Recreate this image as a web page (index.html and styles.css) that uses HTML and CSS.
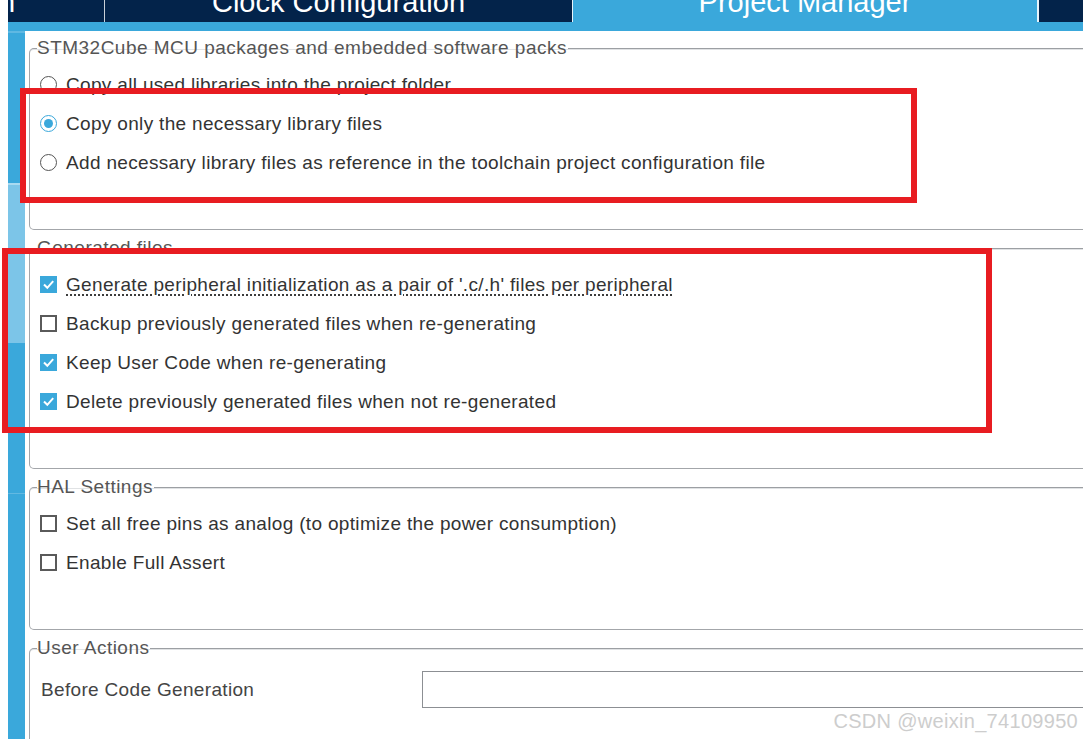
FILE: index.html
```html
<!DOCTYPE html>
<html lang="en">
<head>
<meta charset="UTF-8">
<meta name="viewport" content="width=device-width, initial-scale=1.0">
<title>Project Manager</title>
<link rel="stylesheet" href="styles.css">
</head>
<body>

<div class="app">
  <div class="tabs">
    <div class="tab tab-first">Pinout &amp; Configuration</div>
    <div class="tab tab-clock">Clock Configuration</div>
    <div class="tab tab-active">Project Manager</div>
    <div class="tab tab-last">Tools</div>
  </div>
  <div class="band"></div>

  <div class="main">
    <div class="rail">
      <div class="seg seg-top"></div>
      <div class="seg seg-light"></div>
      <div class="seg seg-bottom"></div>
    </div>

    <div class="content">
      <fieldset class="group">
        <legend>STM32Cube MCU packages and embedded software packs</legend>
        <div class="opt"><span class="radio"></span>Copy all used libraries into the project folder</div>
        <div class="opt"><span class="radio on"></span>Copy only the necessary library files</div>
        <div class="opt"><span class="radio"></span>Add necessary library files as reference in the toolchain project configuration file</div>
      </fieldset>

      <fieldset class="group">
        <legend>Generated files</legend>
        <div class="opt"><span class="check on"><svg viewBox="0 0 17 17"><polyline points="4,8.5 7.3,11.8 13.2,5.2"/></svg></span><span class="dotted">Generate peripheral initialization as a pair of '.c/.h' files per peripheral</span></div>
        <div class="opt"><span class="check"></span>Backup previously generated files when re-generating</div>
        <div class="opt"><span class="check on"><svg viewBox="0 0 17 17"><polyline points="4,8.5 7.3,11.8 13.2,5.2"/></svg></span>Keep User Code when re-generating</div>
        <div class="opt"><span class="check on"><svg viewBox="0 0 17 17"><polyline points="4,8.5 7.3,11.8 13.2,5.2"/></svg></span>Delete previously generated files when not re-generated</div>
      </fieldset>

      <fieldset class="group">
        <legend>HAL Settings</legend>
        <div class="opt"><span class="check"></span>Set all free pins as analog (to optimize the power consumption)</div>
        <div class="opt"><span class="check"></span>Enable Full Assert</div>
      </fieldset>

      <fieldset class="group group-open">
        <legend>User Actions</legend>
        <div class="field">
          <label class="field-label">Before Code Generation</label>
          <input class="field-input" type="text">
        </div>
      </fieldset>
    </div>
  </div>
</div>

<!-- annotation boxes drawn over the screenshot -->
<div class="mark mark-one"></div>
<div class="mark mark-two"></div>

<div class="watermark">CSDN @weixin_74109950</div>

</body>
</html>
```

FILE: styles.css
```css
html, body {
  height: 100%;
}
body {
  margin: 0 0 0 8px;
  overflow: hidden;
  background: #fff;
  font-family: "Liberation Sans", Arial, sans-serif;
  color: #333;
}
.app {
  height: 100%;
  display: flex;
  flex-direction: column;
}

/* top tab bar, scrolled so only the lower half shows */
.tabs {
  height: 22px;
  display: flex;
  overflow: hidden;
  background: #03234a;
  flex: none;
}
.tab {
  flex: none;
  height: 22px;
  line-height: 4px;
  font-size: 29px;
  color: #fff;
  text-align: center;
  white-space: nowrap;
  overflow: hidden;
}
.tab-first {
  width: 468px;
  margin-left: -372px;
  border-right: 1px solid #c9d0d8;
}
.tab-clock {
  width: 467px;
}
.tab-active {
  width: 464px;
  background: #3aa8db;
  border-left: 1px solid #e6f3fa;
  border-right: 2px solid #e6f3fa;
}
.tab-last {
  width: 300px;
}
.band {
  height: 9px;
  background: #3aa8db;
  flex: none;
}

.main {
  flex: 1;
  display: flex;
  min-height: 0;
}
.rail {
  width: 17px;
  flex: none;
  display: flex;
  flex-direction: column;
}
.seg-top {
  height: 150px;
  background: #3aa8db;
  border-top: 2px solid #5fb8e2;
  border-bottom: 2px solid #a9daf1;
}
.seg-light {
  height: 158px;
  background: #7cc5e8;
}
.seg-bottom {
  flex: 1;
  background: #3aa8db;
  background-image: linear-gradient(#3aa8db 150px, #62b9e2 150px, #62b9e2 151px, #3aa8db 151px);
}

.content {
  flex: 1;
  padding: 7px 0 0 4px;
  overflow: hidden;
}

.group {
  margin: 0 -40px 8px 0;
  padding: 7px 0 47px;
  border: 1px solid #a3a6aa;
  border-top-color: #9c9fa3;
  box-shadow: inset 0 1px 0 #e0e2e4;
  border-radius: 5px;
  min-width: 0;
}
.group-open {
  padding-bottom: 200px;
}
.group legend {
  margin-left: 7px;
  padding: 0 1px 0 0;
  line-height: 20px;
  font-size: 19px;
  letter-spacing: 0.48px;
  color: #555;
}

.opt {
  height: 39px;
  display: flex;
  align-items: center;
  padding-left: 10px;
  font-size: 19px;
  letter-spacing: 0.33px;
  color: #333;
  white-space: nowrap;
}
.radio, .check {
  flex: none;
  width: 17px;
  height: 17px;
  box-sizing: border-box;
  margin-right: 9px;
  display: flex;
  align-items: center;
  justify-content: center;
}
.radio {
  border: 1.5px solid #555;
  border-radius: 50%;
}
.radio.on {
  border-color: #3aa8db;
}
.radio.on::after {
  content: "";
  width: 9px;
  height: 9px;
  border-radius: 50%;
  background: #3aa8db;
}
.check {
  border: 2px solid #5a5a5a;
}
.check.on {
  border: none;
  background: #3aa8db;
}
.check svg {
  width: 17px;
  height: 17px;
}
.check polyline {
  fill: none;
  stroke: #fff;
  stroke-width: 2;
}
.dotted {
  text-decoration: underline dotted #333;
  text-underline-offset: 4px;
}

.field {
  display: flex;
  align-items: center;
  padding: 6px 0 0 11px;
}
.field-label {
  width: 381px;
  font-size: 19px;
  letter-spacing: 0.33px;
  color: #444;
}
.field-input {
  flex: 1;
  height: 37px;
  box-sizing: border-box;
  margin: 0;
  border: 1px solid #8c8f93;
  background: #fff;
}

.mark {
  position: absolute;
  border: 6px solid #e81c21;
  box-sizing: border-box;
}
.mark-one {
  left: 20px;
  top: 88px;
  width: 897px;
  height: 115px;
}
.mark-two {
  left: 2px;
  top: 248px;
  width: 990px;
  height: 185px;
}

.watermark {
  position: absolute;
  right: 5px;
  bottom: 6px;
  font-size: 20px;
  letter-spacing: 0.3px;
  color: #cdcdcd;
  text-shadow: 0 0 2px #fff;
}
```
